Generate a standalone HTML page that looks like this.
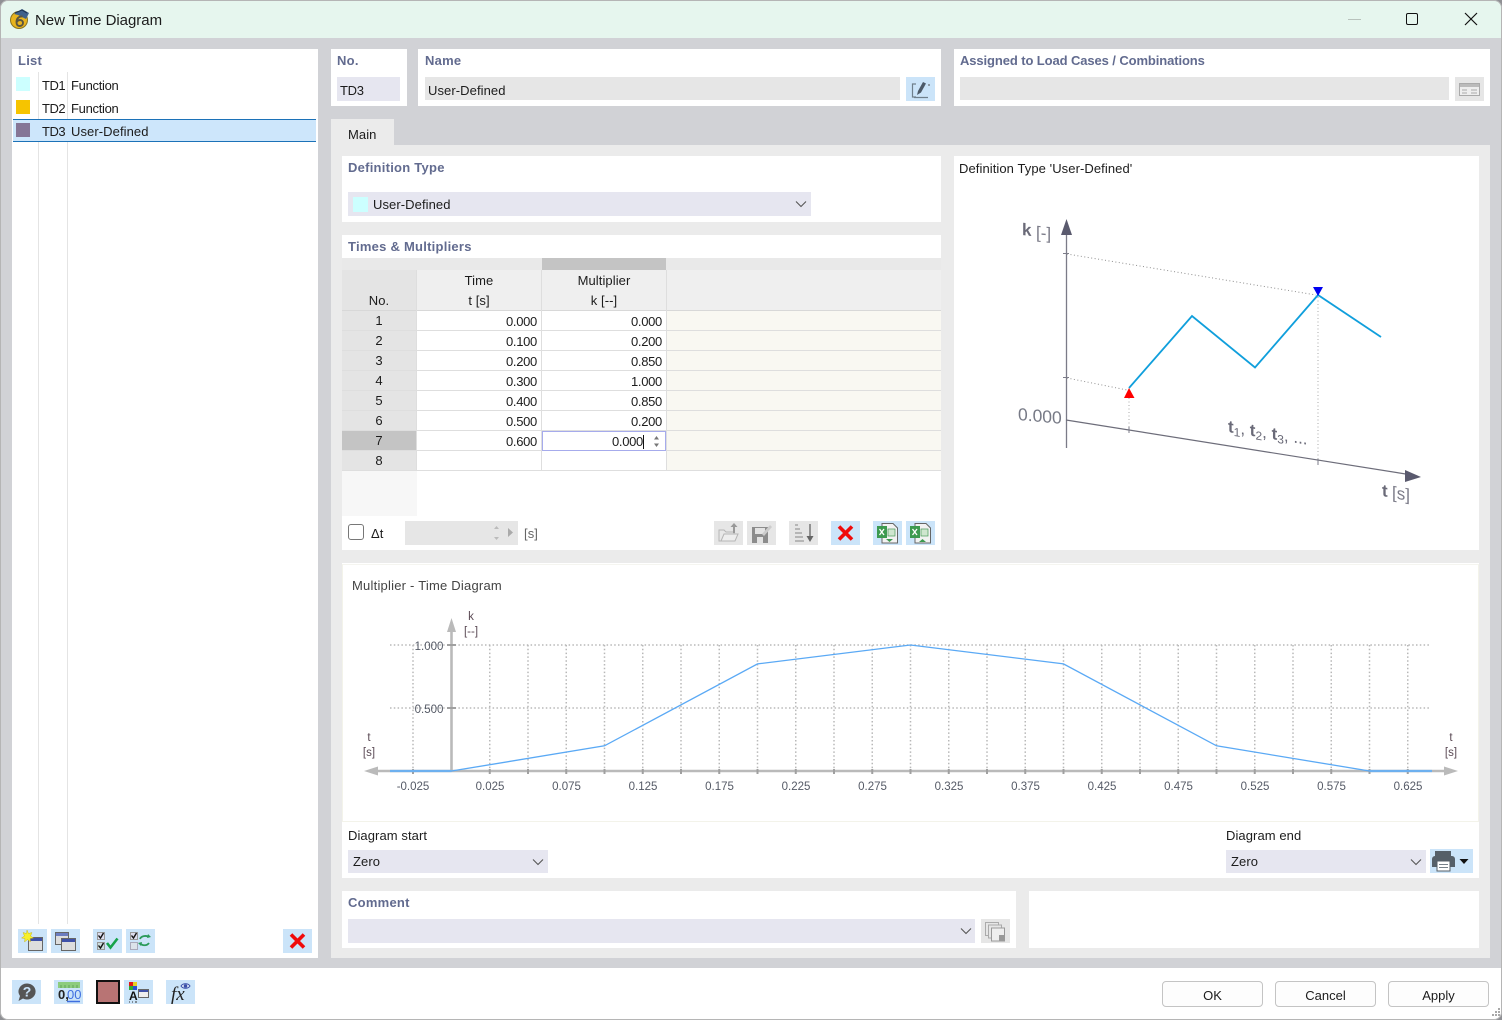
<!DOCTYPE html>
<html><head><meta charset="utf-8"><title>New Time Diagram</title>
<style>
html,body{margin:0;padding:0;background:#8f9094}
body{width:1502px;height:1020px;position:relative;overflow:hidden;font-family:"Liberation Sans",sans-serif;font-size:13px;color:#1c1c1c}
#win{position:absolute;left:0;top:0;width:1502px;height:1020px;background:#d1d2d6;border-radius:8px;overflow:hidden;box-shadow:inset 0 0 0 1px #b5b5b5}
.a{position:absolute}
.w{position:absolute;background:#fff}
.t{position:absolute;white-space:nowrap;line-height:16px;letter-spacing:.08px}
.b{font-weight:bold;color:#626b8f;letter-spacing:.25px}
.r{text-align:right;letter-spacing:-.3px}
.c{text-align:center}
.btn{position:absolute;width:29px;height:24px;background:#cbe4f9}
.dis{background:#e6e6e6}
.btn svg{position:absolute;left:0;top:0}
.inp{position:absolute;background:#e6e6f0}
.gr{position:absolute;background:#e6e6e6}
.ok{position:absolute;width:99px;height:24px;top:981px;border:1px solid #c4c4c4;border-radius:4px;background:#fdfdfd;text-align:center;line-height:27px}
</style></head><body>
<div id="win">
<!-- title -->
<div class="a" style="left:1px;top:1px;width:1500px;height:37px;background:#e6f6ee;border-radius:7px 7px 0 0"></div>
<svg class="a" style="left:9px;top:8px" width="22" height="22" viewBox="0 0 22 22"><circle cx="10" cy="12" r="8.500" fill="#e8b41e" stroke="#8a7420"/><path d="M5 6 L13 1 L20 5 L17 11 L9 7Z" fill="#3f618c"/><path d="M6 5 L13 2 L18 5" fill="none" stroke="#1f3555" stroke-width="1.200"/><path d="M13.500 8.500 C10 8 7.500 10.500 7.500 14 C7.500 17 9 18 10.500 18 C12.500 18 14 16.700 14 15 C14 13 12.500 12 11 12 C9.500 12 8.300 13 8 14" fill="none" stroke="#5c5640" stroke-width="1.900"/></svg>
<div class="t" style="left:35px;top:12px;font-size:15px;letter-spacing:-.03px;line-height:17px">New Time Diagram</div>
<div class="a" style="left:1348px;top:19px;width:13px;height:1px;background:#b8c2bc"></div>
<div class="a" style="left:1406px;top:13px;width:10px;height:10px;border:1.500px solid #111;border-radius:2px"></div>
<svg class="a" style="left:1464px;top:12px" width="14" height="14"><path d="M1 1L13 13M13 1L1 13" stroke="#111" stroke-width="1.200"/></svg>

<!-- list -->
<div class="w" style="left:12px;top:49px;width:306px;height:909px"></div>
<div class="t b" style="left:18px;top:53px">List</div>
<div class="a" style="left:38px;top:72px;width:1px;height:852px;background:#e4e4e4"></div>
<div class="a" style="left:67px;top:72px;width:1px;height:852px;background:#e4e4e4"></div>
<div class="a" style="left:13px;top:119px;width:303px;height:21px;background:#cde6fb;border-top:1px solid #1c72b8;border-bottom:1px solid #1c72b8"></div>
<div class="a" style="left:16px;top:77px;width:14px;height:14px;background:#ccffff"></div>
<div class="a" style="left:16px;top:100px;width:14px;height:14px;background:#f6c400"></div>
<div class="a" style="left:16px;top:123px;width:14px;height:14px;background:#857596"></div>
<div class="t" style="left:42px;top:78px;letter-spacing:-.5px">TD1</div><div class="t" style="left:71px;top:78px;letter-spacing:-.3px">Function</div>
<div class="t" style="left:42px;top:101px;letter-spacing:-.5px">TD2</div><div class="t" style="left:71px;top:101px;letter-spacing:-.3px">Function</div>
<div class="t" style="left:42px;top:124px;letter-spacing:-.5px">TD3</div><div class="t" style="left:71px;top:124px">User-Defined</div>

<div class="btn" style="left:18px;top:929px"><svg width="29" height="24"><rect x="10.500" y="8.500" width="14" height="13" fill="#ddd" stroke="#666"/><rect x="11" y="9" width="13" height="3" fill="#3f51a8"/><path d="M9 1l1.500 3.500 3.500-1-1.500 3.500 3 2-3.500.5.5 3.500-3-2.500-3 2.500.5-3.500-3.500-.5 3-2-1.500-3.500 3.500 1z" fill="#f7f02a" stroke="#c9b81c" stroke-width=".5"/></svg></div>
<div class="btn" style="left:51px;top:929px"><svg width="29" height="24"><rect x="4.500" y="3.500" width="13" height="12" fill="#ddd" stroke="#666"/><rect x="5" y="4" width="12" height="3" fill="#6b7cc0"/><rect x="10.500" y="9.500" width="14" height="12" fill="#ddd" stroke="#666"/><rect x="11" y="10" width="13" height="3" fill="#3f51a8"/></svg></div>
<div class="btn" style="left:93px;top:929px"><svg width="29" height="24"><rect x="4.500" y="3.500" width="7" height="7" fill="#dde" stroke="#999"/><rect x="4.500" y="13.500" width="7" height="7" fill="#cdd" stroke="#999"/><path d="M5.500 6.500l2 2.500 3-5M5.500 16.500l2 2.500 3-5" fill="none" stroke="#111" stroke-width="1.400"/><path d="M14 14l3.500 4.500 7-9" fill="none" stroke="#17a34a" stroke-width="2.600"/></svg></div>
<div class="btn" style="left:126px;top:929px"><svg width="29" height="24"><rect x="4.500" y="3.500" width="7" height="7" fill="#dde" stroke="#999"/><rect x="4.500" y="13.500" width="7" height="7" fill="#dce3ea" stroke="#aab"/><path d="M5.500 6.500l2 2.500 3-5" fill="none" stroke="#111" stroke-width="1.400"/><path d="M14 10c1-3 6-4 9-2M14 14c2 3 7 3 9 0" fill="none" stroke="#2a9a5a" stroke-width="1.800"/><path d="M22 5l3 3-4 1zM15 17l-3-3 4-1z" fill="#2a9a5a"/></svg></div>
<div class="btn" style="left:283px;top:929px"><svg width="29" height="24"><path d="M8 5.500L21 18.500M21 5.500L8 18.500" stroke="#f00b0b" stroke-width="3.600"/></svg></div>

<!-- top panels -->
<div class="w" style="left:331px;top:49px;width:76px;height:57px"></div>
<div class="t b" style="left:337px;top:53px">No.</div>
<div class="inp" style="left:337px;top:77px;width:63px;height:24px"></div>
<div class="t" style="left:340px;top:83px;letter-spacing:-.3px">TD3</div>
<div class="w" style="left:418px;top:49px;width:523px;height:57px"></div>
<div class="t b" style="left:425px;top:53px">Name</div>
<div class="gr" style="left:425px;top:77px;width:475px;height:23px"></div>
<div class="t" style="left:428px;top:83px">User-Defined</div>
<div class="btn" style="left:906px;top:77px;height:24px"><svg width="29" height="24"><path d="M10 7H6.500V20H10M8 20.500H22" fill="none" stroke="#6f7f8c" stroke-width="1.200"/><path d="M11 18l1-4 5-9 3 1.500-5 9z" fill="#4d5a68"/><path d="M22 8h2" stroke="#555"/></svg></div>
<div class="w" style="left:954px;top:49px;width:536px;height:57px"></div>
<div class="t b" style="left:960px;top:53px;letter-spacing:-.1px">Assigned to Load Cases / Combinations</div>
<div class="gr" style="left:960px;top:77px;width:489px;height:23px"></div>
<div class="btn dis" style="left:1455px;top:77px"><svg width="29" height="24"><rect x="4.500" y="6.500" width="20" height="12" fill="#eee" stroke="#aaa"/><rect x="5" y="7" width="19" height="3" fill="#bbb"/><path d="M7 13h5M16 13h6M7 16h5M16 16h6" stroke="#aaa"/></svg></div>

<!-- main tab -->
<div class="a" style="left:331px;top:119px;width:63px;height:27px;background:#ebebeb"></div>
<div class="t" style="left:348px;top:127px">Main</div>
<div class="a" style="left:331px;top:145px;width:1159px;height:813px;background:#ebebeb"></div>

<!-- definition type -->
<div class="w" style="left:342px;top:156px;width:599px;height:66px"></div>
<div class="t b" style="left:348px;top:160px">Definition Type</div>
<div class="inp" style="left:348px;top:192px;width:463px;height:24px"></div>
<div class="a" style="left:353px;top:197px;width:15px;height:15px;background:#ccffff"></div>
<div class="t" style="left:373px;top:197px">User-Defined</div>
<svg class="a" style="left:795px;top:200px" width="12" height="8"><path d="M1 1.500L6 6.500L11 1.500" fill="none" stroke="#555" stroke-width="1.100"/></svg>

<!-- times -->
<div class="w" style="left:342px;top:235px;width:599px;height:315px"></div>
<div class="t b" style="left:348px;top:239px">Times &amp; Multipliers</div>
<div class="a" style="left:342px;top:258px;width:599px;height:12px;background:#e9e9e9"></div>
<div class="a" style="left:542px;top:258px;width:124px;height:12px;background:#c4c4c4"></div>
<div class="a" style="left:342px;top:270px;width:74px;height:40px;background:#e4e4e4"></div>
<div class="a" style="left:417px;top:270px;width:124px;height:40px;background:#efefef"></div>
<div class="a" style="left:542px;top:270px;width:124px;height:40px;background:#efefef"></div>
<div class="a" style="left:667px;top:270px;width:274px;height:40px;background:#efefef"></div>
<div class="t c" style="left:342px;top:293px;width:74px">No.</div>
<div class="t c" style="left:417px;top:273px;width:124px">Time</div>
<div class="t c" style="left:417px;top:293px;width:124px">t [s]</div>
<div class="t c" style="left:542px;top:273px;width:124px">Multiplier</div>
<div class="t c" style="left:542px;top:293px;width:124px">k [--]</div>
<div class="a" style="left:342px;top:311px;width:74px;height:160px;background:#e4e4e4"></div>
<div class="a" style="left:342px;top:431px;width:74px;height:19px;background:#c4c4c4"></div>
<div class="a" style="left:342px;top:471px;width:75px;height:45px;background:#f7f7f7"></div>
<div class="a" style="left:667px;top:311px;width:274px;height:160px;background:#f9f8f2"></div>
<!-- row lines -->
<div class="a" style="left:342px;top:310px;width:599px;height:1px;background:#d8d8d8"></div>
<div class="a" style="left:342px;top:330px;width:599px;height:1px;background:#dedede"></div>
<div class="a" style="left:342px;top:350px;width:599px;height:1px;background:#dedede"></div>
<div class="a" style="left:342px;top:370px;width:599px;height:1px;background:#dedede"></div>
<div class="a" style="left:342px;top:390px;width:599px;height:1px;background:#dedede"></div>
<div class="a" style="left:342px;top:410px;width:599px;height:1px;background:#dedede"></div>
<div class="a" style="left:342px;top:430px;width:599px;height:1px;background:#dedede"></div>
<div class="a" style="left:342px;top:450px;width:599px;height:1px;background:#dedede"></div>
<div class="a" style="left:342px;top:470px;width:599px;height:1px;background:#dedede"></div>
<div class="a" style="left:541px;top:270px;width:1px;height:201px;background:#dedede"></div>
<div class="a" style="left:666px;top:270px;width:1px;height:201px;background:#dedede"></div>
<div class="a" style="left:416px;top:270px;width:1px;height:201px;background:#dedede"></div>
<!-- rows -->
<div class="t c" style="left:342px;top:313px;width:74px">1</div><div class="t r" style="left:417px;top:314px;width:120px">0.000</div><div class="t r" style="left:542px;top:314px;width:120px">0.000</div>
<div class="t c" style="left:342px;top:333px;width:74px">2</div><div class="t r" style="left:417px;top:334px;width:120px">0.100</div><div class="t r" style="left:542px;top:334px;width:120px">0.200</div>
<div class="t c" style="left:342px;top:353px;width:74px">3</div><div class="t r" style="left:417px;top:354px;width:120px">0.200</div><div class="t r" style="left:542px;top:354px;width:120px">0.850</div>
<div class="t c" style="left:342px;top:373px;width:74px">4</div><div class="t r" style="left:417px;top:374px;width:120px">0.300</div><div class="t r" style="left:542px;top:374px;width:120px">1.000</div>
<div class="t c" style="left:342px;top:393px;width:74px">5</div><div class="t r" style="left:417px;top:394px;width:120px">0.400</div><div class="t r" style="left:542px;top:394px;width:120px">0.850</div>
<div class="t c" style="left:342px;top:413px;width:74px">6</div><div class="t r" style="left:417px;top:414px;width:120px">0.500</div><div class="t r" style="left:542px;top:414px;width:120px">0.200</div>
<div class="t c" style="left:342px;top:433px;width:74px">7</div><div class="t r" style="left:417px;top:434px;width:120px">0.600</div>
<div class="t c" style="left:342px;top:453px;width:74px">8</div>
<div class="a" style="left:542px;top:431px;width:122px;height:18px;border:1px solid #a6abec;background:#fff"></div>
<div class="t r" style="left:542px;top:434px;width:101px">0.000</div>
<div class="a" style="left:643px;top:435px;width:1px;height:14px;background:#111"></div>
<svg class="a" style="left:652px;top:435px" width="9" height="13"><path d="M4.500 1L7 4.500H2zM4.500 12L7 8.500H2z" fill="#777"/></svg>
<!-- delta t row -->
<div class="a" style="left:348px;top:524px;width:14px;height:14px;border:1px solid #777;border-radius:3px;background:#fff"></div>
<div class="t" style="left:371px;top:526px">Δt</div>
<div class="gr" style="left:405px;top:521px;width:113px;height:24px"></div>
<svg class="a" style="left:491px;top:524px" width="24" height="18"><path d="M5.500 2L8 5H3zM5.500 16L8 13H3z" fill="#bbb"/><path d="M17 4L22 8.500L17 13z" fill="#aaa"/></svg>
<div class="t" style="left:524px;top:526px;color:#666">[s]</div>
<div class="btn dis" style="left:714px;top:521px"><svg width="29" height="24"><path d="M5 20V9h5l2 2h8v9z" fill="#e8e8e8" stroke="#b5b5b5"/><path d="M7 20l3-7h14l-3 7z" fill="#eee" stroke="#b5b5b5"/><path d="M19 12V6h-2.500L20 2l3.500 4H21v6z" fill="#999"/></svg></div>
<div class="btn dis" style="left:747px;top:521px"><svg width="29" height="24"><path d="M5 6h16v16H5z" fill="#8c8c8c"/><rect x="8" y="7" width="10" height="6" fill="#e3e3e3"/><rect x="10" y="16" width="6" height="6" fill="#e3e3e3"/><path d="M15 13l8-9 2 2-8 9z" fill="#ccc"/></svg></div>
<div class="btn dis" style="left:789px;top:521px"><svg width="29" height="24"><path d="M6 4h3M6 8h5M6 12h7M6 16h8M6 20h9" stroke="#999" stroke-width="1.200"/><path d="M21 3v14" stroke="#666" stroke-width="1.300"/><path d="M17.500 15h7L21 21z" fill="#666"/></svg></div>
<div class="btn" style="left:831px;top:521px"><svg width="29" height="24"><path d="M8 5.500L21 18.500M21 5.500L8 18.500" stroke="#f00b0b" stroke-width="3.600"/></svg></div>
<div class="btn" style="left:873px;top:521px"><svg width="29" height="24"><path d="M9 2.500h11l4.500 4.500v15H9z" fill="#f2f2f2" stroke="#666"/><rect x="4" y="5" width="10" height="12" fill="#3c9a4f"/><path d="M6.500 8l4.500 6M11 8l-4.500 6" stroke="#fff" stroke-width="1.300"/><rect x="15" y="8" width="7" height="7" fill="#cfe6cf" stroke="#4a9a5a" stroke-width=".7"/><path d="M13 18h7l-3.500 3z" fill="#3c9a4f"/></svg></div>
<div class="btn" style="left:906px;top:521px"><svg width="29" height="24"><path d="M9 2.500h11l4.500 4.500v15H9z" fill="#f2f2f2" stroke="#666"/><rect x="4" y="5" width="10" height="12" fill="#3c9a4f"/><path d="M6.500 8l4.500 6M11 8l-4.500 6" stroke="#fff" stroke-width="1.300"/><rect x="15" y="8" width="7" height="7" fill="#cfe6cf" stroke="#4a9a5a" stroke-width=".7"/><path d="M13 21h7l-3.500-3z" fill="#3c9a4f"/></svg></div>

<!-- definition diagram -->
<div class="w" style="left:954px;top:156px;width:525px;height:394px"></div>
<div class="t" style="left:959px;top:161px;letter-spacing:.08px">Definition Type 'User-Defined'</div>
<svg class="a" style="left:954px;top:156px" width="525" height="394" viewBox="954 156 525 394" font-family="Liberation Sans, sans-serif">
<g fill="none">
<path d="M1066.500 232V448" stroke="#7b7b88" stroke-width="1.300"/>
<path d="M1066 420L1412 475" stroke="#6d6d7a" stroke-width="1.200"/>
<path d="M1063 253.500H1069M1063 377.500H1069M1129 426V433M1318 458V465" stroke="#7b7b88"/>
<path d="M1067 254L1316 295M1067 378L1127 390" stroke="#8f8f8f" stroke-dasharray="1 2.500"/>
<path d="M1129 398V427M1318 297V459" stroke="#a8a8a8" stroke-dasharray="1 2.500"/>
<path d="M1129 388L1192 316L1255 367.500L1318 295L1381 337" stroke="#109fdc" stroke-width="1.800"/>
</g>
<path d="M1066.500 219L1072 235H1061Z" fill="#5a5a6e"/>
<path d="M1421 477L1405 470V482Z" fill="#5a5a6e"/>
<path d="M1129 388L1134.500 398H1124Z" fill="#f00"/>
<path d="M1318 296L1313 287H1323Z" fill="#0000f0"/>
<text font-size="17" font-weight="bold" fill="#6a6a78" transform="matrix(1 .1 0 1 1022 235)">k</text>
<text font-size="17" fill="#7b7b88" transform="matrix(1 .1 0 1 1036 238)">[-]</text>
<text font-size="17.500" fill="#777a86" transform="matrix(1 .09 0 1 1018 420)">0.000</text>
<text font-size="17" font-weight="bold" fill="#6a6a78" transform="matrix(1 .16 0 1 1228 432)">t<tspan font-size="12" font-weight="normal" dy="3">1</tspan><tspan font-weight="normal" dy="-3">, </tspan><tspan>t</tspan><tspan font-size="12" font-weight="normal" dy="3">2</tspan><tspan font-weight="normal" dy="-3">, </tspan><tspan>t</tspan><tspan font-size="12" font-weight="normal" dy="3">3</tspan><tspan font-weight="normal" dy="-3">, ...</tspan></text>
<text font-size="17" font-weight="bold" fill="#6a6a78" transform="matrix(1 .16 0 1 1382 496)">t</text>
<text font-size="17" fill="#7b7b88" transform="matrix(1 .16 0 1 1392 498)">[s]</text>
</svg>

<!-- multiplier diagram -->
<div class="w" style="left:342px;top:563px;width:1137px;height:315px"></div>
<div class="a" style="left:342px;top:564px;width:1135px;height:256px;border:1px solid #f3f3ea;border-top-color:#f5f5f0"></div>
<div class="t" style="left:352px;top:578px;color:#444;letter-spacing:.22px">Multiplier - Time Diagram</div>
<svg class="a" style="left:342px;top:563px" width="1137" height="258" viewBox="342 563 1137 258" font-family="Liberation Sans, sans-serif" font-size="11.500" fill="#555a66">
<g fill="none" stroke="#b8b8b8" stroke-width="1.500" stroke-dasharray="1.500 2.300">
<path d="M390 645H1431M390 708H1431"/>
<path d="M413 645V771M489.750 645V771M528 645V771M566.250 645V771M604.500 645V771M642.750 645V771M681 645V771M719.250 645V771M757.500 645V771M795.750 645V771M834 645V771M872.250 645V771M910.500 645V771M948.750 645V771M987 645V771M1025.250 645V771M1063.500 645V771M1101.750 645V771M1140 645V771M1178.250 645V771M1216.500 645V771M1254.750 645V771M1293 645V771M1331.250 645V771M1369.500 645V771M1407.750 645V771"/>
</g>
<path d="M375 771H1446M451.500 628V771" stroke="#bababa" stroke-width="2.600" fill="none"/>
<path d="M364 771L378 766.500V775.500ZM1458 771L1444 766.500V775.500ZM451.500 618L456 632H447Z" fill="#bababa"/>
<path d="M413 769V774M489.750 769V774M528 769V774M566.250 769V774M604.500 769V774M642.750 769V774M681 769V774M719.250 769V774M757.500 769V774M795.750 769V774M834 769V774M872.250 769V774M910.500 769V774M948.750 769V774M987 769V774M1025.250 769V774M1063.500 769V774M1101.750 769V774M1140 769V774M1178.250 769V774M1216.500 769V774M1254.750 769V774M1293 769V774M1331.250 769V774M1369.500 769V774M1407.750 769V774" stroke="#a0a0a0" stroke-width="2" fill="none"/>
<path d="M447 645H456M447 708H456" stroke="#a0a0a0" stroke-width="2"/>
<path d="M390 771H451.500L604.500 745.800L757.500 663.900L910.500 645L1063.500 663.900L1216.500 745.800L1369.500 771H1432" fill="none" stroke="#5aa9f5" stroke-width="1.300"/>
<path d="M390 771H451.500M1369.500 771H1432" fill="none" stroke="#6db0ef" stroke-width="2.200"/>
<g text-anchor="middle">
<text x="413" y="790">-0.025</text><text x="490" y="790">0.025</text><text x="566.500" y="790">0.075</text><text x="643" y="790">0.125</text><text x="719.500" y="790">0.175</text><text x="796" y="790">0.225</text><text x="872.500" y="790">0.275</text><text x="949" y="790">0.325</text><text x="1025.500" y="790">0.375</text><text x="1102" y="790">0.425</text><text x="1178.500" y="790">0.475</text><text x="1255" y="790">0.525</text><text x="1331.500" y="790">0.575</text><text x="1408" y="790">0.625</text>
<text x="471" y="620" fill="#5b4a55">k</text><text x="471" y="635" fill="#5b4a55">[--]</text>
<text x="369" y="741" fill="#5b4a55">t</text><text x="369" y="756" fill="#5b4a55">[s]</text>
<text x="1451" y="741" fill="#5b4a55">t</text><text x="1451" y="756" fill="#5b4a55">[s]</text>
<text x="429" y="650">1.000</text><text x="429" y="713">0.500</text>
</g>
</svg>
<div class="t" style="left:348px;top:828px">Diagram start</div>
<div class="inp" style="left:348px;top:850px;width:200px;height:23px"></div>
<div class="t" style="left:353px;top:854px">Zero</div>
<svg class="a" style="left:532px;top:858px" width="12" height="8"><path d="M1 1.500L6 6.500L11 1.500" fill="none" stroke="#555" stroke-width="1.100"/></svg>
<div class="t" style="left:1226px;top:828px">Diagram end</div>
<div class="inp" style="left:1226px;top:850px;width:200px;height:23px"></div>
<div class="t" style="left:1231px;top:854px">Zero</div>
<svg class="a" style="left:1410px;top:858px" width="12" height="8"><path d="M1 1.500L6 6.500L11 1.500" fill="none" stroke="#555" stroke-width="1.100"/></svg>
<div class="btn" style="left:1430px;top:849px;width:43px"><svg width="43" height="24"><rect x="5" y="2" width="16" height="5" fill="#555f68"/><path d="M2 10a3 3 0 0 1 3-3h17a3 3 0 0 1 3 3v8H2z" fill="#555f68"/><rect x="7" y="12" width="13" height="10" fill="#fff" stroke="#555f68"/><path d="M9 15.500h9M9 18.500h9" stroke="#77818a"/><path d="M29.500 10h9L34 15z" fill="#111"/></svg></div>

<!-- comment -->
<div class="w" style="left:342px;top:891px;width:674px;height:57px"></div>
<div class="t b" style="left:348px;top:895px">Comment</div>
<div class="inp" style="left:348px;top:919px;width:627px;height:24px"></div>
<svg class="a" style="left:960px;top:927px" width="12" height="8"><path d="M1 1.500L6 6.500L11 1.500" fill="none" stroke="#555" stroke-width="1.100"/></svg>
<div class="btn dis" style="left:981px;top:919px"><svg width="29" height="24"><rect x="4.500" y="3.500" width="13" height="13" fill="#e6e6e6" stroke="#aaa"/><rect x="7.500" y="6" width="13" height="13" fill="#e6e6e6" stroke="#aaa"/><rect x="10.500" y="9" width="13" height="13" fill="#eee" stroke="#999"/><rect x="18" y="16" width="6" height="6" fill="#999"/></svg></div>
<div class="w" style="left:1029px;top:891px;width:450px;height:57px"></div>

<!-- bottom bar -->
<div class="a" style="left:1px;top:968px;width:1500px;height:51px;background:#fff;border-radius:0 0 7px 7px"></div>
<div class="btn" style="left:12px;top:980px"><svg width="29" height="24"><path d="M15 3.500a8.500 8 0 1 1-4 15l-4.500 2.500 1.500-5a8.500 8 0 0 1 7-12.500z" fill="#555"/><text x="15" y="16.500" text-anchor="middle" font-size="14" font-weight="bold" fill="#cbe4f9" font-family="Liberation Sans, sans-serif">?</text></svg></div>
<div class="btn" style="left:54px;top:980px"><svg width="29" height="24"><rect x="4" y="2" width="22" height="6" fill="#8dcc7e"/><path d="M7 5v3M11 5v3M15 5v3M19 5v3M23 5v3" stroke="#5a9a50" stroke-width=".8"/><text x="4" y="19" font-size="13" font-weight="bold" fill="#222" font-family="Liberation Sans, sans-serif">0,</text><text x="13" y="19" font-size="13" fill="#3f6fe0" font-family="Liberation Sans, sans-serif">00</text><path d="M13 21.500H26" stroke="#3f6fe0" stroke-width="1.500"/></svg></div>
<div class="a" style="left:96px;top:980px;width:20px;height:20px;background:#b87474;border:2px solid #111"></div>
<div class="btn" style="left:124px;top:980px"><svg width="29" height="24"><rect x="5" y="2" width="4" height="4" fill="#e01818"/><rect x="9" y="2" width="4" height="4" fill="#e8d020"/><rect x="5" y="6" width="4" height="4" fill="#2faa2f"/><rect x="9" y="6" width="4" height="4" fill="#2a4fd0"/><text x="5" y="20" font-size="12" font-weight="bold" fill="#111" font-family="Liberation Sans, sans-serif">A</text><rect x="14.500" y="9.500" width="10" height="8" fill="#eee" stroke="#666"/><rect x="15" y="10" width="9" height="2" fill="#3f51a8"/><path d="M5 22h1M8 22h1M11 22h2" stroke="#333"/></svg></div>
<div class="btn" style="left:166px;top:980px"><svg width="29" height="24"><text x="5" y="20" font-size="19" font-style="italic" fill="#222" font-family="Liberation Serif, serif">fx</text><path d="M15 6c2-3 7-3 9 0c-2 3-7 3-9 0z" fill="#e8f1fb" stroke="#3a4fa8"/><circle cx="19.500" cy="6" r="1.800" fill="#3a4fa8"/></svg></div>
<div class="ok" style="left:1162px">OK</div>
<div class="ok" style="left:1275px">Cancel</div>
<div class="ok" style="left:1388px">Apply</div>
<svg class="a" style="left:1489px;top:1007px" width="12" height="12"><path d="M9 1h2v2H9zM6 4h2v2H6zM9 4h2v2H9zM3 7h2v2H3zM6 7h2v2H6zM9 7h2v2H9z" fill="#a8a8a8"/></svg>
</div>
</body></html>
